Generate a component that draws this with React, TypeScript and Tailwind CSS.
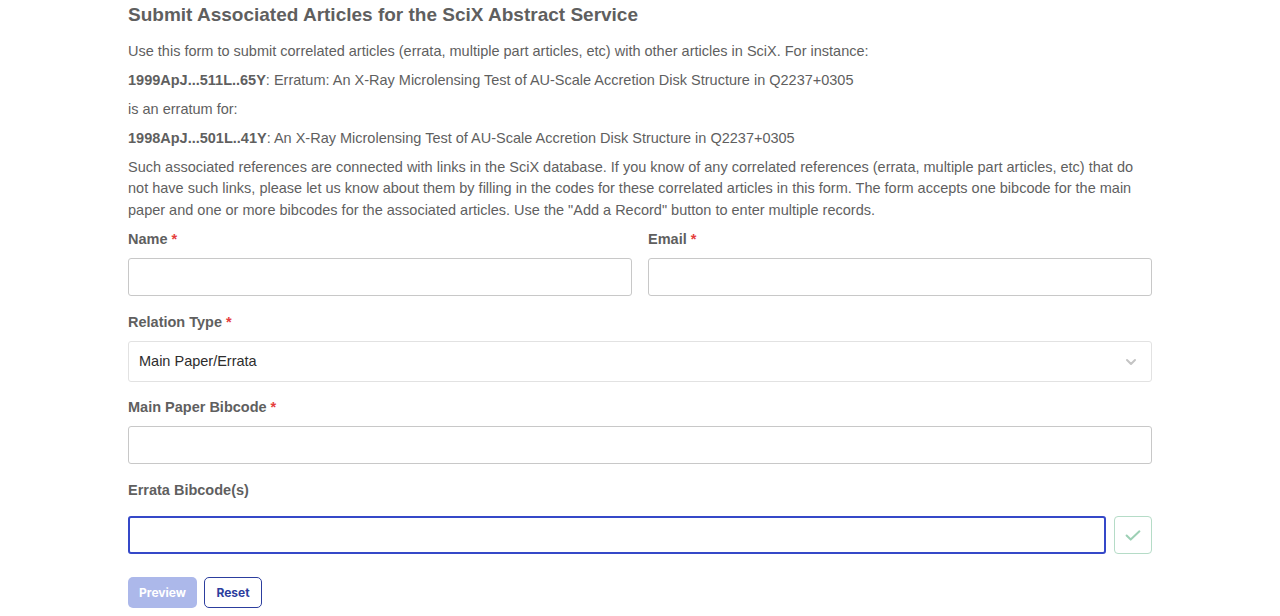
import React from "react";

const Req = () => <span className="text-[#e53e3e] ml-1">*</span>;

export default function App() {
  return (
    <div className="w-full min-h-[616px] bg-white" style={{ fontFamily: '"Liberation Sans", Arial, sans-serif' }}>
      <div className="w-[1024px] mx-auto text-[#5f5f5f]">
        <h1 className="text-[19px] font-bold leading-[24px] pt-[3px] text-[#5f5f5f]">Submit Associated Articles for the SciX Abstract Service</h1>
        <div className="mt-[14px] text-[14.5px] leading-[21.6px]">
          <p>Use this form to submit correlated articles (errata, multiple part articles, etc) with other articles in SciX. For instance:</p>
          <p className="mt-[7.4px]"><b>1999ApJ...511L..65Y</b>: Erratum: An X-Ray Microlensing Test of AU-Scale Accretion Disk Structure in Q2237+0305</p>
          <p className="mt-[7.4px]">is an erratum for:</p>
          <p className="mt-[7.4px]"><b>1998ApJ...501L..41Y</b>: An X-Ray Microlensing Test of AU-Scale Accretion Disk Structure in Q2237+0305</p>
          <p className="mt-[7px]">Such associated references are connected with links in the SciX database. If you know of any correlated references (errata, multiple part articles, etc) that do not have such links, please let us know about them by filling in the codes for these correlated articles in this form. The form accepts one bibcode for the main paper and one or more bibcodes for the associated articles. Use the "Add a Record" button to enter multiple records.</p>
        </div>
        <div className="mt-[8px] flex gap-4">
          <div className="flex-1">
            <label className="block text-[14.5px] font-bold leading-[20px]">Name<Req /></label>
            <input className="mt-[9px] block w-full h-[38px] border border-[#c8c8c8] rounded-[3px] outline-none" />
          </div>
          <div className="flex-1">
            <label className="block text-[14.5px] font-bold leading-[20px]">Email<Req /></label>
            <input className="mt-[9px] block w-full h-[38px] border border-[#c8c8c8] rounded-[3px] outline-none" />
          </div>
        </div>
        <label className="mt-[16px] block text-[14.5px] font-bold leading-[20px]">Relation Type<Req /></label>
        <div className="mt-[9px] h-[41px] border border-[#e2e2e2] rounded-[3px] flex items-center justify-between pl-[10px] pr-[12px]">
          <span className="text-[14.5px] text-[#2d2d2d]">Main Paper/Errata</span>
          <svg width="16" height="16" viewBox="0 0 24 24" fill="none" stroke="#c4c4c4" strokeWidth="3" strokeLinecap="round" strokeLinejoin="round"><path d="M6 9l6 6 6-6" /></svg>
        </div>
        <label className="mt-[15px] block text-[14.5px] font-bold leading-[20px]">Main Paper Bibcode<Req /></label>
        <input className="mt-[9px] block w-full h-[38px] border border-[#c8c8c8] rounded-[3px] outline-none" />
        <label className="mt-[16px] block text-[14.5px] font-bold leading-[20px]">Errata Bibcode(s)</label>
        <div className="mt-[16px] flex gap-2">
          <input className="flex-1 h-[38px] border-2 border-[#3548c8] rounded-[3px] outline-none" />
          <button className="w-[38px] h-[38px] border border-[#b5dcc7] rounded-[4px] flex items-center justify-center">
            <svg width="22" height="22" viewBox="0 0 24 24" fill="none" stroke="#9dd0b5" strokeWidth="2.2" strokeLinecap="round" strokeLinejoin="round"><path d="M5 12.5l4.5 4.5L19 8" /></svg>
          </button>
        </div>
        <div className="mt-[23px] flex gap-[7px]" style={{ fontFamily: 'Inter, sans-serif' }}>
          <button className="h-[31px] w-[69px] rounded-[5px] bg-[#acb8ea] text-white text-[12px] font-bold">Preview</button>
          <button className="h-[31px] w-[58px] rounded-[5px] border border-[#2c3e9e] text-[#2c3e9e] text-[12px] font-bold">Reset</button>
        </div>
      </div>
    </div>
  );
}
